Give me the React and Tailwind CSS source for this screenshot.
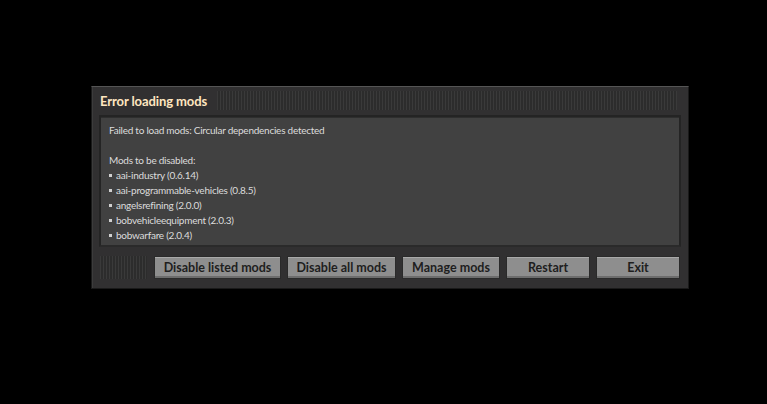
import React from "react";

const mods = [
  "aai-industry (0.6.14)",
  "aai-programmable-vehicles (0.8.5)",
  "angelsrefining (2.0.0)",
  "bobvehicleequipment (2.0.3)",
  "bobwarfare (2.0.4)",
];

const buttons = [
  { label: "Disable listed mods", w: "w-[127px]" },
  { label: "Disable all mods", w: "w-[109px]" },
  { label: "Manage mods", w: "w-[98px]" },
  { label: "Restart", w: "w-[84px]" },
  { label: "Exit", w: "w-[84px]" },
];

function Stripes({ className }) {
  return (
    <div
      className={
        "bg-[repeating-linear-gradient(90deg,#3a3a3a_0px,#3a3a3a_1px,#2c2c2c_1px,#2c2c2c_3px)] " +
        className
      }
    />
  );
}

export default function App() {
  return (
    <div className="w-[767px] h-[404px] bg-black overflow-hidden font-['Lato',sans-serif]">
      <div className="ml-[91px] pt-[86px]">
        {/* Window */}
        <div className="w-[598px] h-[203px] bg-[#313031] border border-[#1a1a1a] border-t-[#555] shadow-[inset_1px_0_0_#3c3c3c] px-[7px]">
          {/* Title bar */}
          <div className="flex items-center h-[28px] pt-[1px]">
            <span className="text-[13px] font-bold text-[#ffe6c0] tracking-[-0.1px] pl-[1px] leading-none">
              Error loading mods
            </span>
            <Stripes className="ml-[10px] flex-1 h-[19px] mr-[4px] mb-[3px]" />
          </div>

          {/* Inner panel */}
          <div className="w-[582px] h-[132px] bg-[#414141] border-2 border-[#242424] border-b-[#2a2a2a] shadow-[inset_0_1px_0_#2e2e2e] pl-[8px] pt-[6px] text-[10px] tracking-[-0.25px] leading-[15px] text-[#dcdcdc]">
            <div>Failed to load mods: Circular dependencies detected</div>
            <div className="h-[15px]" />
            <div>Mods to be disabled:</div>
            {mods.map((m) => (
              <div key={m} className="flex items-center">
                <span className="w-[3px] h-[3px] bg-[#d0d0d0] mr-[4px]" />
                {m}
              </div>
            ))}
          </div>

          {/* Buttons */}
          <div className="flex items-center mt-[9px] h-[23px]">
            <Stripes className="ml-[1px] w-[47px] h-[23px] mr-[7px]" />
            <div className="flex gap-[6px]">
              {buttons.map((b) => (
                <div
                  key={b.label}
                  className={
                    b.w +
                    " h-[23px] pt-[2px] bg-[#8e8e8e] border border-[#2a2a2a] shadow-[inset_0_1px_0_#a9a9a9,inset_0_-2px_0_#6d6d6d] flex items-center justify-center text-[12.5px] font-bold text-[#1e1e1e] leading-none"
                  }
                >
                  {b.label}
                </div>
              ))}
            </div>
          </div>
        </div>
      </div>
    </div>
  );
}
